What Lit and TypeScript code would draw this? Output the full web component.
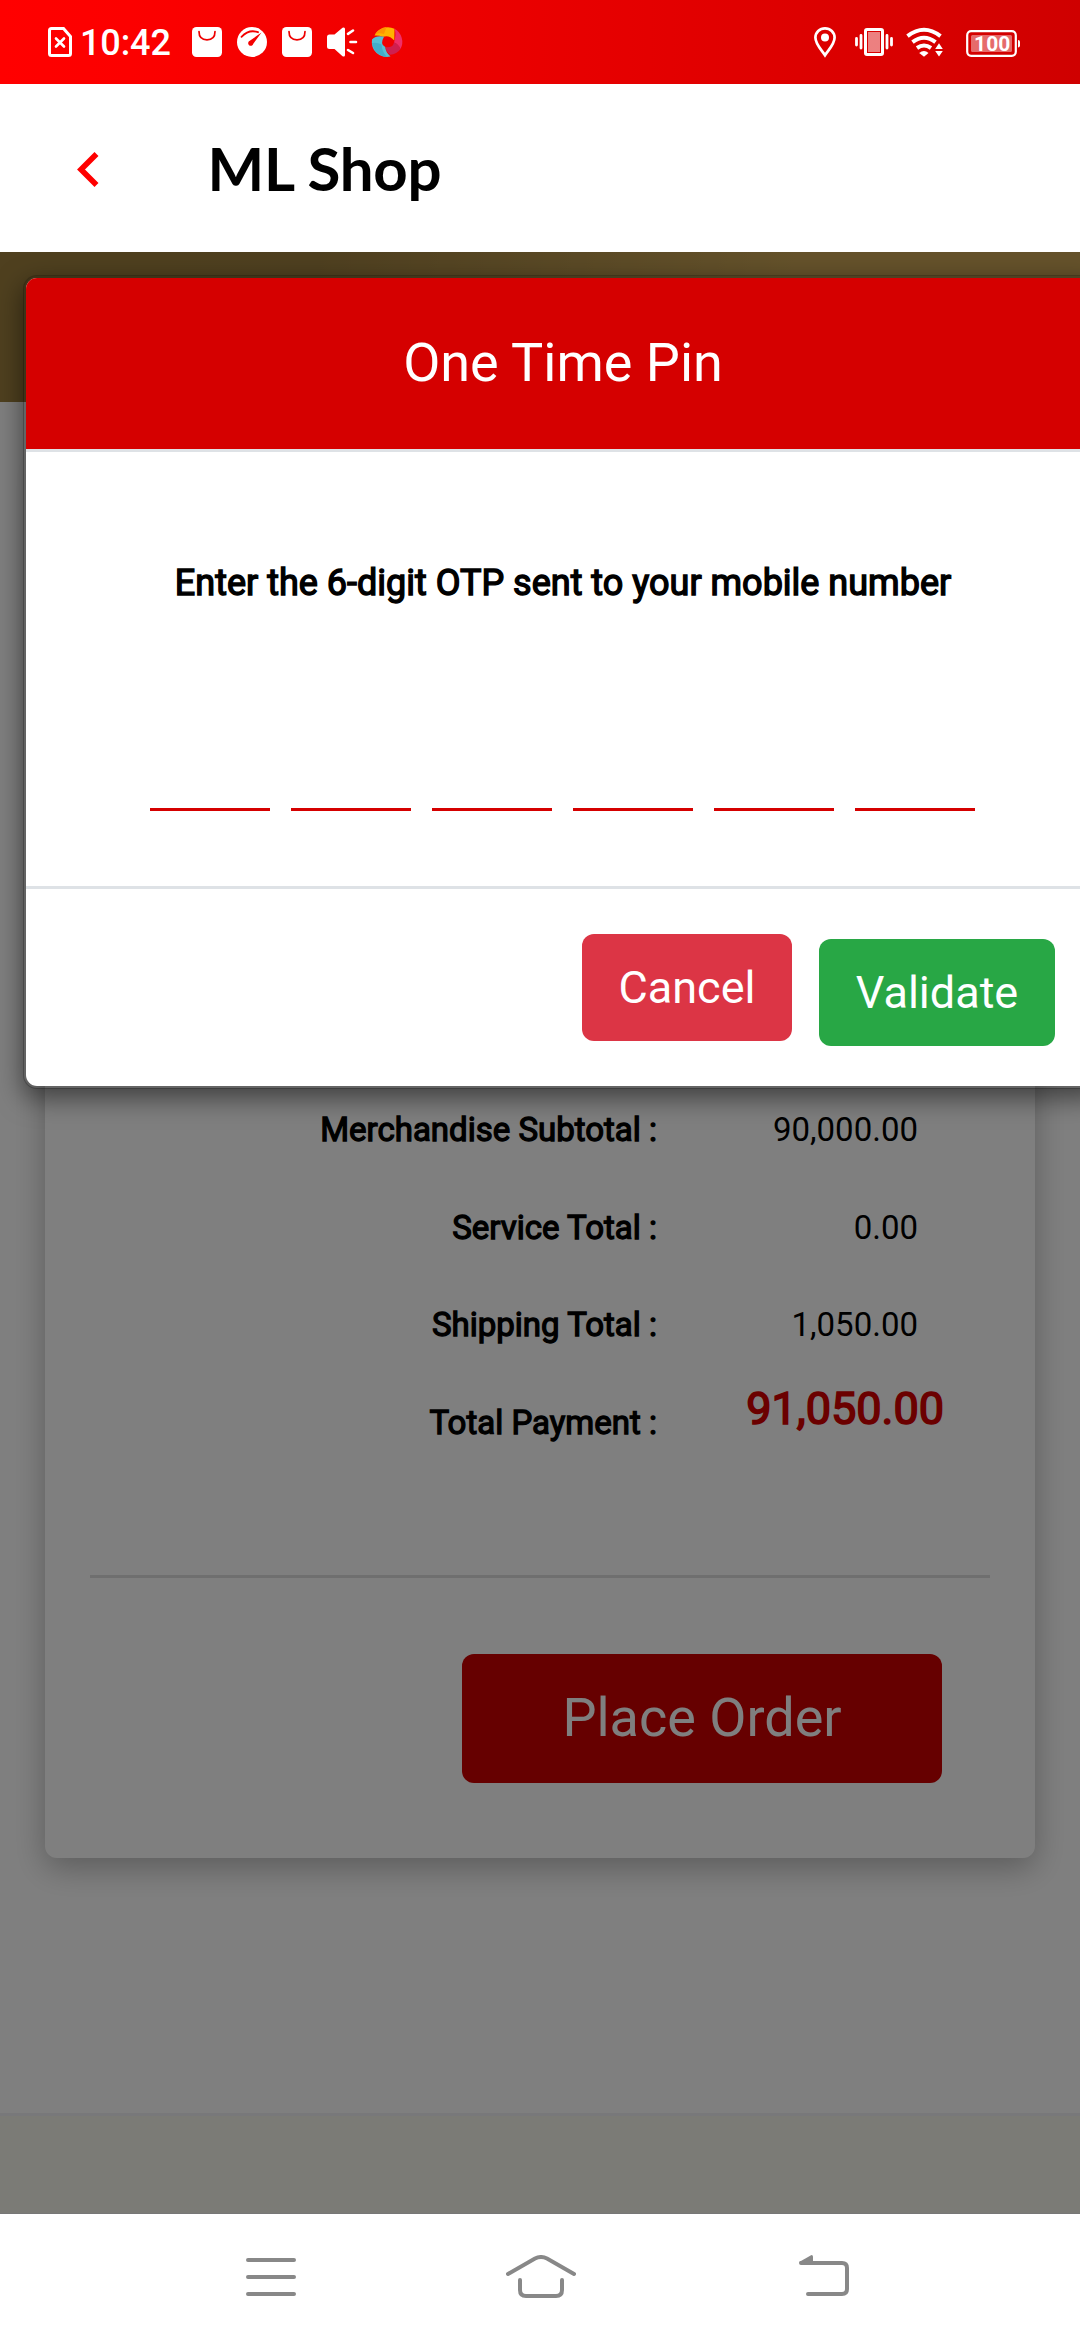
import { LitElement, html, css, svg } from "lit";
import { customElement } from "lit/decorators.js";

const bag = () => html`<svg class="icon" width="30" height="30" viewBox="0 0 30 30">
  <rect width="30" height="30" rx="4.5" fill="#fff" />
  <path d="M7 4.5C7 10 10.3 12.8 15 12.8S23 10 23 4.5" fill="none" stroke="#ee0000" stroke-width="1.7" stroke-linecap="round" />
</svg>`;

@customElement("status-bar")
class StatusBar extends LitElement {
  static styles = css`
    :host {
      display: flex;
      justify-content: space-between;
      height: 84px;
      box-sizing: border-box;
      padding: 27px 60px 0 48px;
      background: linear-gradient(90deg, #ff0000 0%, #fc0000 12%, #d60000 88%, #cf0000 100%);
      color: #fff;
      font-family: Roboto, "Liberation Sans", sans-serif;
    }
    .group {
      display: flex;
      height: 30px;
    }
    .icon {
      display: block;
      flex: none;
      overflow: visible;
    }
    .notifications {
      display: flex;
      gap: 15px;
    }
    .time {
      width: 93px;
      margin: 0 19px 0 8px;
      font-size: 36px;
      font-weight: 500;
      line-height: 33px;
      letter-spacing: -0.1px;
      white-space: nowrap;
    }
    .vibrate {
      margin-left: 19px;
    }
    .wifi {
      margin-left: 13px;
    }
    .battery {
      margin-left: 23px;
    }
    .level {
      font: 700 21px Roboto, sans-serif;
    }
  `;

  render() {
    return html`
      <div class="group">
        <svg class="icon" width="24" height="30" viewBox="0 0 24 30" fill="none" stroke="#fff">
          <path d="M3.5 1.5H15.5L22.5 9.5V26.5Q22.5 28.5 20.5 28.5H3.5Q1.5 28.5 1.5 26.5V3.5Q1.5 1.5 3.5 1.5Z" stroke-width="3" />
          <path d="M8 11.5L16 19.5M16 11.5L8 19.5" stroke-width="2.6" stroke-linecap="round" />
        </svg>
        <span class="time">10:42</span>
        <div class="notifications">
          ${bag()}
          <svg class="icon" width="30" height="30" viewBox="0 0 30 30">
            <circle cx="15" cy="15" r="15" fill="#fff" />
            <path d="M4.5 9.8Q12 2 21 5.2" fill="none" stroke="#f40000" stroke-width="1.8" stroke-linecap="round" />
            <path d="M24.5 5.5L12.8 13.8A2.6 2.6 0 1 0 16.3 16.8Z" fill="#f40000" />
          </svg>
          ${bag()}
          <svg class="icon" width="30" height="30" viewBox="0 0 30 30">
            <path d="M2.5 7.5H7.5L15.5 .8Q18 -.3 18 2V28Q18 30.3 15.5 29.2L7.5 22H2.5Q0 22 0 19.5V10Q0 7.5 2.5 7.5Z" fill="#fff" />
            <path d="M21 6.8L26 3.5M23.5 15H29M21 23L26 26" stroke="#fff" stroke-width="2.6" stroke-linecap="round" />
          </svg>
          <svg class="icon" width="30" height="30" viewBox="0 0 30 30">
            <path d="M2.5 8.5A15 15 0 0 1 22.5 1.8L22.3 13.5Q17 7.5 11 9.8Q6 8 2.5 8.5Z" fill="#ffb300" />
            <path d="M3 7.5Q7 1 14.5 0L12 7Q7 5.5 3 7.5Z" fill="#ff9500" />
            <path d="M22.6 1.8A15 15 0 0 1 28.5 22Q26 17 22 15.5Q24.5 8 22.6 1.8Z" fill="#ee2f68" />
            <path d="M28.5 22Q25 27.3 18 27.8Q14 24.5 13.6 20.3Q21 20.8 22 15.5Q26.5 16.5 28.5 22Z" fill="#cf1f4f" />
            <path d="M12 9.8Q4.5 8 0 12.5A15 15 0 0 0 18.5 29.6Q13.5 25 13.2 20Q7.5 17.5 12 9.8Z" fill="#55bfd4" />
            <path d="M0 16Q5 15 9.5 17.5Q10 25 15 30Q2.5 28.5 0 16Z" fill="#43adc9" />
          </svg>
        </div>
      </div>
      <div class="group">
        <svg class="icon" width="22" height="30" viewBox="0 0 22 30">
          <path d="M11 28.3C8 23.5 1.4 17.5 1.4 10.6A9.6 9.3 0 0 1 20.6 10.6C20.6 17.5 14 23.5 11 28.3Z" fill="none" stroke="#fff" stroke-width="2.7" />
          <circle cx="11" cy="10.6" r="4" fill="#fff" />
        </svg>
        <svg class="icon vibrate" width="38" height="30" viewBox="0 0 38 30">
          <rect x="10.5" y="2.5" width="17" height="25" rx="1.5" fill="none" stroke="#fff" stroke-width="3" />
          <rect x="13" y="5" width="12" height="20" fill="#fff" fill-opacity=".5" />
          <path d="M1.5 11.5V18M6 8.5V21M32 8.5V21M36.5 11.5V18" stroke="#fff" stroke-width="2.8" stroke-linecap="round" />
        </svg>
        <svg class="icon wifi" width="37" height="30" viewBox="0 0 37 30">
          <g fill="none" stroke="#fff" stroke-width="4">
            <path d="M1.5 9.2Q18 -3.6 34.5 9.2" />
            <path d="M6.5 15.2Q18 6.2 29.5 15.2" />
            <path d="M11 21Q18 16 25 21" />
          </g>
          <path d="M13.2 26Q18 22 22.5 26L18 29.8Z" fill="#fff" />
          <path d="M33 16.3L36.8 22H29.2ZM29.2 24H36.8L33 29.5Z" fill="#fff" />
        </svg>
        <svg class="icon battery" width="54" height="30" viewBox="0 0 54 30">
          <rect x="1.2" y="4.2" width="48.6" height="24.6" rx="4" fill="none" stroke="#fff" stroke-width="2.2" />
          <rect x="5" y="8" width="41" height="17" rx="1.5" fill="#fff" fill-opacity=".42" />
          <path d="M52 13Q54 13 54 15V18.5Q54 20.5 52 20.5Z" fill="#fff" />
          ${svg`<text class="level" x="26.2" y="24" text-anchor="middle" fill="#fff">100</text>`}
        </svg>
      </div>
    `;
  }
}

@customElement("nav-bar")
class NavBar extends LitElement {
  static styles = css`
    :host {
      display: flex;
      height: 126px;
      box-sizing: border-box;
      padding: 41px 0 0 246px;
      background: #fff;
    }
    .icon {
      display: block;
      flex: none;
    }
    .home {
      margin-left: 210px;
    }
    .back {
      margin-left: 222px;
    }
  `;

  render() {
    return html`
      <svg class="icon" width="50" height="44" viewBox="0 0 50 44" stroke="#888" stroke-width="4" stroke-linecap="round">
        <path d="M2 5H48M2 22H48M2 39H48" />
      </svg>
      <svg class="icon home" width="70" height="44" viewBox="0 0 70 44" fill="none" stroke="#888" stroke-width="4" stroke-linecap="round">
        <path d="M2 19L29 3.5Q35 .5 41 3.5L68 19" />
        <path d="M14 25V35Q14 41 20 41H50Q56 41 56 35V25" />
      </svg>
      <svg class="icon back" width="52" height="44" viewBox="0 0 52 44" fill="none" stroke="#888" stroke-width="4" stroke-linecap="round">
        <path d="M3 8H44Q49 8 49 13V34Q49 39 44 39H10" />
        <path d="M1.2 7L13.5 0Q15 0 15 1.5V8H2Z" fill="#888" stroke="none" />
      </svg>
    `;
  }
}

@customElement("otp-dialog")
class OtpDialog extends LitElement {
  static styles = css`
    :host {
      display: flex;
      flex-direction: column;
      box-sizing: border-box;
      border: 3px solid rgba(0, 0, 0, 0.2);
      border-radius: 14px;
      background: #fff;
      background-clip: padding-box;
      box-shadow: 0 9px 27px rgba(0, 0, 0, 0.5);
      font-family: Roboto, "Liberation Sans", sans-serif;
    }
    .header {
      height: 171px;
      border-bottom: 3px solid #dee2e6;
      border-radius: 11px 11px 0 0;
      background: #d50000;
      background-clip: padding-box;
      color: #fff;
      font-size: 54px;
      line-height: 169px;
      text-align: center;
    }
    .body {
      display: flex;
      flex-direction: column;
      align-items: center;
      justify-content: space-between;
      height: 434px;
      box-sizing: border-box;
      padding: 103px 0 75px;
    }
    .prompt {
      color: #000;
      font-size: 36px;
      line-height: 56px;
      white-space: nowrap;
      -webkit-text-stroke: 1.4px #000;
    }
    .digits {
      display: flex;
      gap: 21px;
      margin-right: 1px;
    }
    .digit {
      width: 120px;
      height: 90px;
      border-bottom: 3px solid #d50000;
    }
    .footer {
      display: flex;
      justify-content: flex-end;
      align-items: flex-start;
      gap: 27px;
      height: 197px;
      box-sizing: border-box;
      padding: 45px 45px 0 0;
    }
    .rule {
      height: 3px;
      background: #dee2e6;
    }
    .button {
      height: 107px;
      border: 0;
      border-radius: 12px;
      padding: 0;
      color: #fff;
      font: 400 45px/107px Roboto, "Liberation Sans", sans-serif;
      text-align: center;
    }
    .cancel {
      width: 210px;
      background: #dc3545;
    }
    .validate {
      width: 236px;
      margin-top: 5px;
      background: #28a745;
    }
  `;

  render() {
    return html`
      <div class="header">One Time Pin</div>
      <div class="body">
        <div class="prompt">Enter the 6-digit OTP sent to your mobile number</div>
        <div class="digits">${[1, 2, 3, 4, 5, 6].map(() => html`<span class="digit"></span>`)}</div>
      </div>
      <div class="rule"></div>
      <div class="footer">
        <button class="button cancel">Cancel</button>
        <button class="button validate">Validate</button>
      </div>
    `;
  }
}

const totals = [
  ["Merchandise Subtotal :", "90,000.00"],
  ["Service Total :", "0.00"],
  ["Shipping Total :", "1,050.00"],
];

@customElement("app-root")
class AppRoot extends LitElement {
  static styles = css`
    :host {
      display: flex;
      flex-direction: column;
      width: 1080px;
      height: 2340px;
      overflow: hidden;
      background: #fff;
      color: #000;
      font-family: Roboto, "Liberation Sans", sans-serif;
    }
    .titlebar {
      display: flex;
      align-items: center;
      height: 168px;
      box-sizing: border-box;
      padding-left: 77px;
    }
    .chevron {
      display: block;
      margin-top: 2px;
    }
    .title {
      margin-left: 107.5px;
      font: 700 60px/72px Lato, "Open Sans", sans-serif;
      letter-spacing: -0.25px;
    }
    .view {
      position: relative;
      display: flex;
      flex-direction: column;
      height: 1962px;
      overflow: hidden;
    }
    .banner {
      flex: none;
      height: 150px;
      background: linear-gradient(100deg, #9e803e 0%, #9e8040 28%, #caa556 72%, #caa556 100%);
    }
    .card {
      display: flex;
      flex-direction: column;
      height: 1408px;
      box-sizing: border-box;
      margin: 48px 45px 0;
      padding: 631px 45px 0;
      border-radius: 12px;
      background: #fff;
      box-shadow: 0 10px 32px rgba(0, 0, 0, 0.28);
    }
    .row {
      display: flex;
      height: 97.6px;
      font-size: 33px;
      line-height: 97.6px;
    }
    .label {
      width: 567px;
      text-align: right;
      -webkit-text-stroke: 1.3px #000;
    }
    .amount {
      width: 261px;
      text-align: right;
    }
    .grand {
      width: 287px;
      color: #d60000;
      font-size: 45px;
      line-height: 69px;
      text-align: right;
      -webkit-text-stroke: 1.6px #d60000;
    }
    .rule {
      height: 3px;
      margin: 103.6px 0 76px;
      background: rgba(0, 0, 0, 0.13);
    }
    .order {
      width: 480px;
      height: 129px;
      margin-left: 372px;
      padding: 0 0 2px;
      border: 0;
      border-radius: 12px;
      background: #cc0000;
      color: #fff;
      font: 400 54px/127px Roboto, "Liberation Sans", sans-serif;
    }
    .footer {
      flex: none;
      height: 101px;
      box-sizing: border-box;
      margin-top: auto;
      border-top: 3px solid #f0f0f4;
      border-bottom: 1px solid #eeeeee;
      background: #f7f7ed;
    }
    .backdrop {
      position: absolute;
      inset: 0;
      background: rgba(0, 0, 0, 0.5);
    }
    .dialog {
      position: absolute;
      top: 23px;
      left: 23px;
      width: 1080px;
    }
  `;

  render() {
    return html`
      <status-bar></status-bar>
      <header class="titlebar">
        <svg class="chevron" width="23" height="37" viewBox="0 0 23 37">
          <path d="M19.5 3L4 18.5L19.5 34" fill="none" stroke="#ff0000" stroke-width="5.6" />
        </svg>
        <span class="title">ML Shop</span>
      </header>
      <main class="view">
        <div class="banner"></div>
        <section class="card">
          ${totals.map(
            ([label, amount]) => html`<div class="row"><span class="label">${label}</span><span class="amount">${amount}</span></div>`
          )}
          <div class="row"><span class="label">Total Payment :</span><span class="grand">91,050.00</span></div>
          <div class="rule"></div>
          <button class="order">Place Order</button>
        </section>
        <div class="footer"></div>
        <div class="backdrop"></div>
        <otp-dialog class="dialog"></otp-dialog>
      </main>
      <nav-bar></nav-bar>
    `;
  }
}
